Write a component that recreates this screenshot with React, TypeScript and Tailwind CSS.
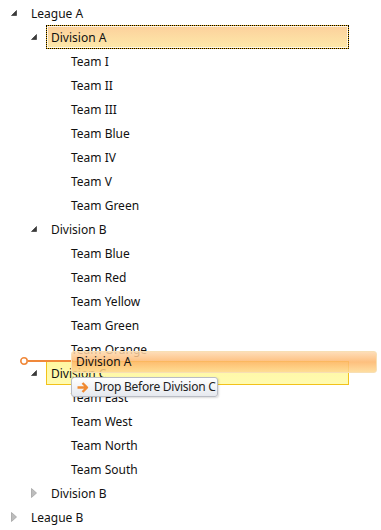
import React from 'react';

type Expander = 'open' | 'closed' | 'none';
type Variant = 'plain' | 'selected' | 'target';

interface NodeRow {
  label: string;
  level: number;
  expander: Expander;
  variant?: Variant;
}

const rows: NodeRow[] = [
  { label: 'League A', level: 0, expander: 'open' },
  { label: 'Division A', level: 1, expander: 'open', variant: 'selected' },
  { label: 'Team I', level: 2, expander: 'none' },
  { label: 'Team II', level: 2, expander: 'none' },
  { label: 'Team III', level: 2, expander: 'none' },
  { label: 'Team Blue', level: 2, expander: 'none' },
  { label: 'Team IV', level: 2, expander: 'none' },
  { label: 'Team V', level: 2, expander: 'none' },
  { label: 'Team Green', level: 2, expander: 'none' },
  { label: 'Division B', level: 1, expander: 'open' },
  { label: 'Team Blue', level: 2, expander: 'none' },
  { label: 'Team Red', level: 2, expander: 'none' },
  { label: 'Team Yellow', level: 2, expander: 'none' },
  { label: 'Team Green', level: 2, expander: 'none' },
  { label: 'Team Orange', level: 2, expander: 'none' },
  { label: 'Division C', level: 1, expander: 'open', variant: 'target' },
  { label: 'Team East', level: 2, expander: 'none' },
  { label: 'Team West', level: 2, expander: 'none' },
  { label: 'Team North', level: 2, expander: 'none' },
  { label: 'Team South', level: 2, expander: 'none' },
  { label: 'Division B', level: 1, expander: 'closed' },
  { label: 'League B', level: 0, expander: 'closed' },
];

const indent = ['pl-0', 'pl-[20px]', 'pl-[40px]'];

const ExpanderGlyph: React.FC<{ kind: Expander }> = ({ kind }) => {
  if (kind === 'open') {
    return (
      <svg width="6" height="6" viewBox="0 0 6 6" className="ml-[11px] shrink-0">
        <polygon points="5.5,0.5 5.5,5.5 0.5,5.5" fill="#3a3a3a" stroke="#262626" strokeWidth="0.6" />
      </svg>
    );
  }
  if (kind === 'closed') {
    return (
      <svg width="6" height="10" viewBox="0 0 6 10" className="ml-[11px] shrink-0">
        <polygon points="0.5,0.5 5.5,5 0.5,9.5" fill="#bdbdbd" stroke="#a3a3a3" strokeWidth="0.8" />
      </svg>
    );
  }
  return null;
};

const TreeRow: React.FC<{ row: NodeRow }> = ({ row }) => {
  let box = 'border border-transparent';
  if (row.variant === 'selected') {
    box =
      'w-[303px] border border-[#e3ad1c] outline outline-1 outline-dotted outline-black -outline-offset-1 bg-gradient-to-b from-[#fcd09c] to-[#fde9a9] shadow-[inset_0_0_0_1px_rgba(255,255,255,0.75)]';
  } else if (row.variant === 'target') {
    box = 'w-[303px] border border-[#f2c21b] bg-gradient-to-b from-[#fff7a2] to-[#fffbb0]';
  }
  return (
    <div className={`flex h-[24px] items-center ${indent[row.level]}`}>
      <div className="flex w-[26px] shrink-0 items-center">
        <ExpanderGlyph kind={row.expander} />
      </div>
      <div className={`flex h-[24px] items-center pl-[4px] pr-[6px] pt-[1px] ${box}`}>
        <span className="whitespace-nowrap">{row.label}</span>
      </div>
    </div>
  );
};

export default function App() {
  return (
    <div
      className="relative h-[530px] w-[381px] overflow-hidden bg-white pt-[1px] text-[12px] text-[#111]"
      style={{ fontFamily: '"Segoe UI", "Noto Sans", "Open Sans", sans-serif' }}
    >
      {rows.map((row, i) => (
        <TreeRow key={i} row={row} />
      ))}

      {/* drop position marker */}
      <svg width="54" height="10" viewBox="0 0 54 10" className="absolute left-[19px] top-[356px]">
        <line x1="9" y1="5" x2="54" y2="5" stroke="#f0883a" strokeWidth="2" />
        <circle cx="5" cy="5" r="3.2" fill="#fff" stroke="#f0883a" strokeWidth="1.6" />
      </svg>

      {/* dragged item */}
      <div className="absolute left-[71px] top-[351px] flex h-[22px] w-[306px] items-center rounded-[3px] border border-[#f8dfb4] bg-gradient-to-b from-[#fdd7ab]/85 via-[#fdb467]/85 to-[#fed890]/85 pl-[4px]">
        <span className="whitespace-nowrap">Division A</span>
      </div>

      {/* drop tooltip */}
      <div className="absolute left-[71px] top-[377px] flex h-[20px] w-[147px] items-center gap-[5px] rounded-[3px] border border-[#b9bcc4] bg-gradient-to-b from-white to-[#e6e9ef] pl-[5px] shadow-[1px_1px_2px_rgba(0,0,0,0.15)]">
        <svg width="12" height="11" viewBox="0 0 12 11" className="shrink-0">
          <path d="M0.5 5.5 H10 M5.5 1 L10 5.5 L5.5 10" fill="none" stroke="#f08a32" strokeWidth="2.4" strokeLinejoin="round" />
        </svg>
        <span className="whitespace-nowrap tracking-[-0.25px] text-[#222]">Drop Before Division C</span>
      </div>
    </div>
  );
}
